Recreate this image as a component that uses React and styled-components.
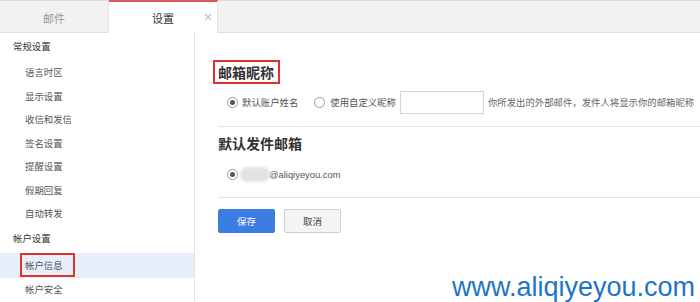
import React from "react";
import styled, { createGlobalStyle } from "styled-components";

const Global = createGlobalStyle`
  html, body { margin: 0; padding: 0; background: #fff; }
  body { font-family: "Liberation Sans", "Noto Sans CJK SC", sans-serif; font-size: 9.4px; color: #333; }
  * { box-sizing: border-box; }
`;

const Page = styled.div`
  position: relative;
  width: 700px;
  height: 302px;
  overflow: hidden;
  display: flex;
  flex-direction: column;
`;

const TabBar = styled.div`
  display: flex;
  height: 33px;
  background: #f2f2f2;
  border-top: 1px solid #dcdcdc;
  border-bottom: 1px solid #dedede;
`;

const Tab = styled.div`
  position: relative;
  width: 109px;
  display: flex;
  align-items: center;
  justify-content: center;
  font-size: 11px;
  color: ${p => (p.$active ? "#333" : "#999")};
  background: ${p => (p.$active ? "#fff" : "transparent")};
  border-top: 2px solid ${p => (p.$active ? "#e0585a" : "transparent")};
  margin-top: -1px;
  margin-bottom: -1px;
  border-right: 1px solid #e4e4e4;
`;

const Close = styled.span`
  position: absolute;
  right: 4px;
  top: 8px;
  color: #bbb;
  font-size: 12px;
  font-family: "DejaVu Sans", sans-serif;
`;

const Body = styled.div`
  flex: 1;
  display: flex;
`;

const Sidebar = styled.div`
  width: 195px;
  flex-shrink: 0;
  border-right: 1px solid #e2e2e2;
  padding-top: 2px;
  display: flex;
  flex-direction: column;
`;

const Group = styled.div`
  height: 24px;
  line-height: 24px;
  padding-left: 13px;
  color: #333;
  margin: ${p => p.$m};
`;

const Item = styled.div`
  height: ${p => (p.$selected ? 25 : 23.5)}px;
  line-height: ${p => (p.$selected ? 25 : 23.5)}px;
  padding-left: 25px;
  color: #555;
  background: ${p => (p.$selected ? "#e6eefa" : "transparent")};
  margin-top: ${p => (p.$selected ? 2 : 0)}px;
  position: relative;
`;

const RedBox = styled.span`
  position: absolute;
  left: ${p => p.$l}px;
  top: ${p => p.$t}px;
  width: ${p => p.$w}px;
  height: ${p => p.$h}px;
  border: 2px solid #e0312f;
`;

const Main = styled.div`
  flex: 1;
  padding: 27px 0 0 23px;
  display: flex;
  flex-direction: column;
`;

const Heading = styled.div`
  position: relative;
  font-family: "Noto Sans CJK SC", sans-serif;
  font-size: 14px;
  font-weight: 700;
  color: #333;
  height: 24px;
  line-height: 24px;
`;

const Row = styled.div`
  display: flex;
  align-items: center;
  padding-left: 9px;
  height: 24px;
  color: #555;
  margin-top: ${p => p.$mt}px;
`;

const Radio = styled.span`
  width: 11px;
  height: 11px;
  flex-shrink: 0;
  border-radius: 50%;
  border: 1px solid #9a9a9a;
  display: inline-flex;
  align-items: center;
  justify-content: center;
  margin-right: ${p => p.$mr || 4}px;
  &::after {
    content: "";
    width: 5px;
    height: 5px;
    border-radius: 50%;
    background: ${p => (p.$checked ? "#555" : "transparent")};
  }
`;

const Label = styled.span`
  white-space: nowrap;
  margin-right: ${p => p.$mr || 0}px;
`;

const Input = styled.div`
  width: 84px;
  height: 23px;
  flex-shrink: 0;
  border: 1px solid #d6d6d6;
  margin: 0 4px;
  background: #fff;
`;

const Hint = styled.span`
  color: #666;
  white-space: nowrap;
`;

const Divider = styled.div`
  height: 1px;
  background: #e2e2e2;
  margin: ${p => p.$m};
`;

const Blob = styled.span`
  width: 30px;
  height: 15px;
  border-radius: 7px;
  background: #e2e2e2;
  filter: blur(1.5px);
  margin-left: -1px;
  margin-right: -1px;
`;

const Buttons = styled.div`
  display: flex;
  gap: 9px;
`;

const Button = styled.div`
  width: 57px;
  height: 24px;
  display: flex;
  align-items: center;
  justify-content: center;
  border-radius: 2px;
  font-size: 9.5px;
  color: ${p => (p.$primary ? "#fff" : "#444")};
  background: ${p => (p.$primary ? "#3b7de0" : "#f4f4f4")};
  border: 1px solid ${p => (p.$primary ? "#3b7de0" : "#cfcfcf")};
`;

const Watermark = styled.div`
  position: absolute;
  right: 5px;
  top: 272px;
  font-family: "Liberation Sans", Arial, sans-serif;
  font-size: 27px;
  line-height: 1.117;
  color: #1f75c4;
`;

const sub1 = ["语言时区", "显示设置", "收信和发信", "签名设置", "提醒设置", "假期回复", "自动转发"];

export default function App() {
  return (
    <Page>
      <Global />
      <TabBar>
        <Tab>邮件</Tab>
        <Tab $active>
          设置<Close>×</Close>
        </Tab>
      </TabBar>
      <Body>
        <Sidebar>
          <Group $m="0 0 2px 0">常规设置</Group>
          {sub1.map(s => (
            <Item key={s}>{s}</Item>
          ))}
          <Group $m="1px 0 0 0">帐户设置</Group>
          <Item $selected>
            帐户信息
            <RedBox $l={20} $t={0} $w={55} $h={24} />
          </Item>
          <Item>帐户安全</Item>
        </Sidebar>
        <Main>
          <Heading>
            邮箱昵称
            <RedBox $l={-5} $t={0} $w={67} $h={24} />
          </Heading>
          <Row $mt={6}>
            <Radio $checked />
            <Label $mr={16}>默认账户姓名</Label>
            <Radio $mr={5} />
            <Label>使用自定义昵称</Label>
            <Input />
            <Hint>你所发出的外部邮件，发件人将显示你的邮箱昵称</Hint>
          </Row>
          <Divider $m="12px 0 4px 0" />
          <Heading>默认发件邮箱</Heading>
          <Row $mt={7}>
            <Radio $checked $mr={3} />
            <Blob />
            <Label>@aliqiyeyou.com</Label>
          </Row>
          <Divider $m="11px 0 11px 0" />
          <Buttons>
            <Button $primary>保存</Button>
            <Button>取消</Button>
          </Buttons>
        </Main>
      </Body>
      <Watermark>www.aliqiyeyou.com</Watermark>
    </Page>
  );
}
